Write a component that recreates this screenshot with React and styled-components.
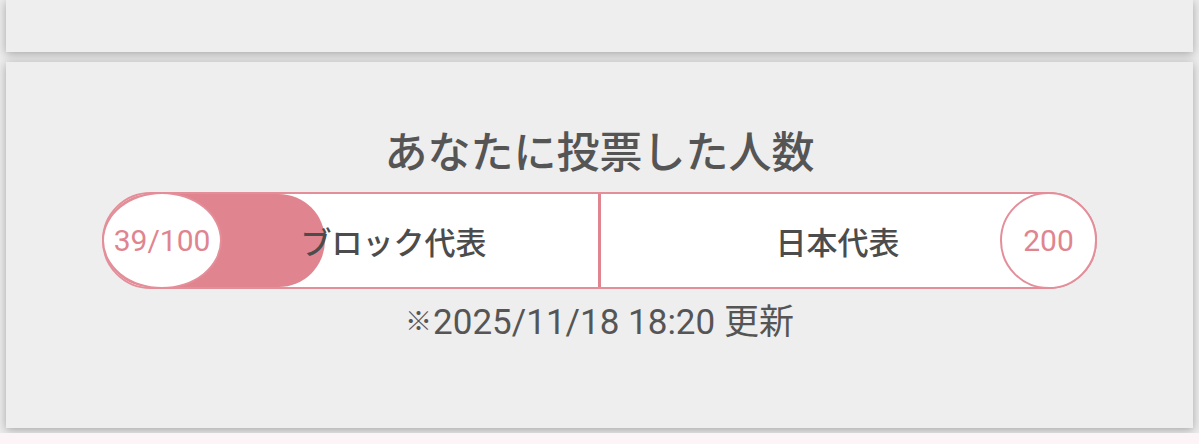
import React from "react";
import styled, { createGlobalStyle } from "styled-components";

const Global = createGlobalStyle`
  html, body {
    margin: 0;
    padding: 0;
    background: #ececec;
    font-family: Roboto, "Noto Sans CJK JP", sans-serif;
  }
`;

const Page = styled.div`
  width: 1199px;
  height: 444px;
  overflow: hidden;
  display: flex;
  flex-direction: column;
`;

const Cards = styled.div`
  display: flex;
  flex-direction: column;
  gap: 10px;
  padding: 0 6px;
`;

const Card = styled.section`
  background: #eeeeee;
  box-shadow: 0 2px 9px rgba(0, 0, 0, 0.3);
  height: ${(p) => p.$h}px;
`;

const VoteCard = styled(Card)`
  display: flex;
  flex-direction: column;
  align-items: center;
  padding-top: 66px;
  box-sizing: border-box;
`;

const Title = styled.h2`
  margin: 0;
  font-size: 43px;
  line-height: 50px;
  font-weight: 500;
  color: #555555;
`;

const Bar = styled.div`
  position: relative;
  margin-top: 14px;
  width: 995px;
  height: 97px;
  box-sizing: border-box;
  border: 2px solid #e38e99;
  border-radius: 49px;
  background: #ffffff;
  display: grid;
  grid-template-columns: 1fr 3px 1fr;
`;

const Fill = styled.div`
  position: absolute;
  top: 0;
  bottom: 0;
  left: 0;
  background: #e0858f;
  border-radius: 47px;
  z-index: 0;
`;

const Segment = styled.div`
  position: relative;
  z-index: 1;
  display: flex;
  align-items: center;
  justify-content: center;
  padding-left: ${(p) => p.$padL || 0}px;
  padding-right: ${(p) => p.$padR || 0}px;
  font-size: 31px;
  color: #4c4c4c;
  font-weight: 500;
`;

const Divider = styled.div`
  position: relative;
  z-index: 1;
  background: #e0858f;
`;

const Badge = styled.div`
  position: absolute;
  top: -2px;
  ${(p) => (p.$side === "left" ? "left: -2px;" : "right: -2px;")}
  width: ${(p) => p.$w}px;
  height: 97px;
  box-sizing: border-box;
  border: 2px solid #e38e99;
  border-radius: 50%;
  background: #ffffff;
  z-index: 2;
  display: flex;
  align-items: center;
  justify-content: center;
  font-size: 30px;
  color: #e0858f;
`;

const Updated = styled.p`
  margin: 13px 0 0;
  font-size: 35px;
  line-height: 40px;
  color: #555555;
`;

const NoteMark = styled.span`
  display: inline-block;
  font-size: 27px;
  font-weight: 700;
  margin-right: 1px;
  vertical-align: 3px;
`;

const Footer = styled.div`
  margin-top: 5px;
  flex: 1;
  background: #fdf4f8;
`;

const block = { count: 39, target: 100, label: "ブロック代表" };
const national = { count: 200, label: "日本代表" };

export default function App() {
  const pct = (block.count / block.target) * 100;
  return (
    <>
      <Global />
      <Page>
        <Cards>
          <Card $h={52} />
          <VoteCard $h={366}>
            <Title>あなたに投票した人数</Title>
            <Bar>
              <Fill style={{ width: `calc(${pct}% * 0.5 + 28px)` }} />
              <Badge $side="left" $w={120}>
                {block.count}/{block.target}
              </Badge>
              <Segment $padL={85}>{block.label}</Segment>
              <Divider />
              <Segment $padR={21}>{national.label}</Segment>
              <Badge $side="right" $w={97}>
                {national.count}
              </Badge>
            </Bar>
            <Updated>
              <NoteMark>※</NoteMark>2025/11/18 18:20 更新
            </Updated>
          </VoteCard>
        </Cards>
        <Footer />
      </Page>
    </>
  );
}
